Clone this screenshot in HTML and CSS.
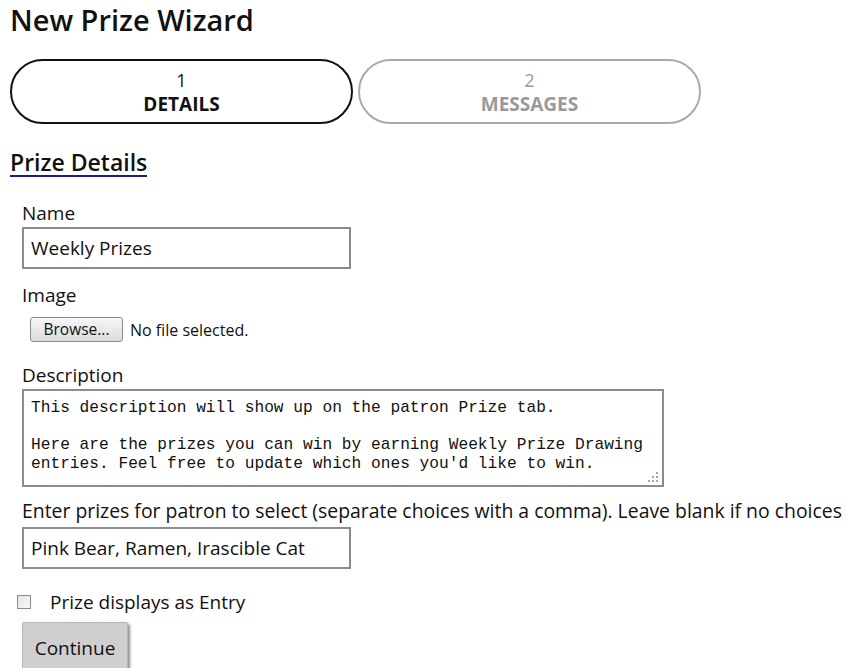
FILE: index.html
```html
<!DOCTYPE html>
<html>
<head>
<meta charset="utf-8">
<link rel="stylesheet" href="styles.css">
</head>
<body>
<div class="page">
  <h1 class="title">New Prize Wizard</h1>
  <div class="steps">
    <div class="step active"><span class="num">1</span><span class="name">DETAILS</span></div>
    <div class="step"><span class="num">2</span><span class="name">MESSAGES</span></div>
  </div>
  <h2 class="section">Prize Details</h2>
  <form class="form">
    <div class="field">
      <label class="label">Name</label>
      <input class="text-input" type="text" value="Weekly Prizes">
    </div>
    <div class="field field-file">
      <label class="label">Image</label>
      <div class="file-row"><span class="browse">Browse...</span><span class="file-note">No file selected.</span></div>
    </div>
    <div class="field field-area">
      <label class="label">Description</label>
      <div class="area-wrap">
        <textarea class="textarea">This description will show up on the patron Prize tab.

Here are the prizes you can win by earning Weekly Prize Drawing entries. Feel free to update which ones you'd like to win.</textarea>
        <svg class="grip" width="11" height="11" viewBox="0 0 11 11"><g fill="#a6a6a6"><rect x="8" y="0" width="2" height="2"/><rect x="4" y="4" width="2" height="2"/><rect x="8" y="4" width="2" height="2"/><rect x="0" y="8" width="2" height="2"/><rect x="4" y="8" width="2" height="2"/><rect x="8" y="8" width="2" height="2"/></g></svg>
      </div>
    </div>
    <div class="field field-choices">
      <label class="label label-long">Enter prizes for patron to select (separate choices with a comma). Leave blank if no choices</label>
      <input class="text-input" type="text" value="Pink Bear, Ramen, Irascible Cat">
    </div>
  </form>
  <div class="check-row"><input class="check" type="checkbox"><span class="check-label">Prize displays as Entry</span></div>
  <div class="actions"><button class="continue" type="button">Continue</button></div>
</div>
</body>
</html>
```
FILE: styles.css
```css
html, body {
  margin: 0;
  padding: 0;
  background: #fff;
  color: #111;
  font-family: "Open Sans", "Noto Sans", sans-serif;
}
.page {
  padding: 0 10px;
  height: 668px;
  overflow: hidden;
}
.title {
  margin: 0;
  font-size: 29px;
  font-weight: 600;
  line-height: 40px;
  color: #111;
}
.steps {
  display: flex;
  gap: 5px;
  margin-top: 19px;
}
.step {
  width: 343px;
  height: 65px;
  box-sizing: border-box;
  border: 2px solid #aaa;
  border-radius: 33px;
  display: flex;
  flex-direction: column;
  align-items: center;
  justify-content: center;
  color: #999;
  font-size: 19px;
  line-height: 24px;
}
.step .num {
  font-size: 18px;
}
.step.active {
  border-color: #111;
  color: #111;
}
.step .name {
  font-weight: 700;
}
.section {
  display: inline-block;
  margin: 25px 0 0 0;
  font-size: 23px;
  font-weight: 600;
  line-height: 26px;
  border-bottom: 2px solid #1a1a8c;
}
.form {
  padding-left: 12px;
  margin-top: 23px;
}
.field {
  display: flex;
  flex-direction: column;
  align-items: flex-start;
  margin-bottom: 13px;
}
.field.field-file {
  margin-bottom: 20px;
}
.field.field-area {
  margin-bottom: 11px;
}
.field.field-choices {
  margin-bottom: 0;
}
.label {
  font-size: 19px;
  line-height: 26px;
  color: #111;
}
.label-long {
  font-size: 19.4px;
}
.text-input {
  width: 329px;
  height: 42px;
  margin-top: 1px;
  box-sizing: border-box;
  border: 2px solid #8c8c8c;
  padding: 0 7px;
  font-family: "Open Sans", "Noto Sans", sans-serif;
  font-size: 19px;
  color: #111;
  outline: none;
}
.field-choices .text-input {
  margin-top: 3px;
}
.file-row {
  display: flex;
  align-items: center;
  gap: 7px;
  margin-left: 8px;
  margin-top: 9px;
}
.browse {
  width: 93px;
  height: 25px;
  box-sizing: border-box;
  border: 1px solid #8a8a8a;
  border-radius: 3px;
  background: linear-gradient(#f6f6f6, #dcdcdc);
  font-size: 15.5px;
  line-height: 23px;
  text-align: center;
  color: #111;
}
.file-note {
  font-size: 16px;
  color: #111;
}
.area-wrap {
  position: relative;
  margin-top: 1px;
  height: 98px;
}
.textarea {
  display: block;
  width: 642px;
  height: 98px;
  margin: 0;
  box-sizing: border-box;
  border: 2px solid #8c8c8c;
  padding: 8px 7px;
  font-family: "Liberation Mono", "Courier New", monospace;
  font-size: 16.2px;
  line-height: 18.5px;
  color: #111;
  resize: none;
  outline: none;
}
.grip {
  position: absolute;
  right: 5px;
  bottom: 4px;
}
.check-row {
  display: flex;
  align-items: center;
  height: 24px;
  margin-left: 7px;
  margin-top: 21px;
}
.check {
  appearance: none;
  -webkit-appearance: none;
  width: 14px;
  height: 14px;
  margin: 0 19px 0 0;
  border: 1px solid #8a8a8a;
  background: linear-gradient(135deg, #e4e4e4, #fafafa);
}
.check-label {
  font-size: 19px;
  color: #111;
}
.actions {
  padding-left: 12px;
  margin-top: 8px;
}
.continue {
  width: 106px;
  height: 52px;
  border: 1px solid #b5b5b5;
  border-radius: 2px;
  background: #cfcfcf;
  box-shadow: 2px 2px 3px rgba(0,0,0,0.45);
  font-family: "Open Sans", "Noto Sans", sans-serif;
  font-size: 19px;
  color: #111;
  padding: 0;
}
```
